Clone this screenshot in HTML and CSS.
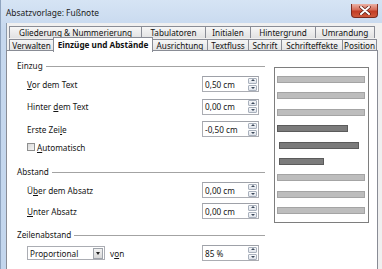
FILE: index.html
```html
<!DOCTYPE html>
<html lang="de">
<head>
<meta charset="utf-8">
<title>Absatzvorlage: Fußnote</title>
<link rel="stylesheet" href="styles.css">
</head>
<body>
<div class="window">
  <div class="titlebar">
    <span class="title">Absatzvorlage: Fußnote</span>
    <div class="close">
      <svg width="12" height="9" viewBox="0 0 12 9"><path d="M2 1 L10 8 M10 1 L2 8" stroke="#5a1a10" stroke-width="3.4" stroke-linecap="round"/><path d="M2 1 L10 8 M10 1 L2 8" stroke="#fff" stroke-width="2" stroke-linecap="round"/></svg>
    </div>
  </div>
  <div class="client">
    <div class="tabrow row1">
      <div class="tab w-glied">Gliederung &amp; Nummerierung</div>
      <div class="tab w-tab">Tabulatoren</div>
      <div class="tab w-init">Initialen</div>
      <div class="tab w-hint">Hintergrund</div>
      <div class="tab w-umr">Umrandung</div>
    </div>
    <div class="tabrow row2">
      <div class="tab w-verw">Verwalten</div>
      <div class="tab active w-einz">Einzüge und Abstände</div>
      <div class="tab w-ausr">Ausrichtung</div>
      <div class="tab w-text">Textfluss</div>
      <div class="tab w-schr">Schrift</div>
      <div class="tab w-eff">Schrifteffekte</div>
      <div class="tab w-pos">Position</div>
    </div>
    <div class="panel">
      <div class="form">
        <div class="hdr hdr-einzug"><span>Einzug</span><i></i></div>
        <div class="row r1"><span class="lbl"><u>V</u>or dem Text</span><div class="spin"><span>0,50 cm</span><b class="btns"><em class="up"></em><em class="dn"></em></b></div></div>
        <div class="row r2"><span class="lbl">Hinter <u>d</u>em Text</span><div class="spin"><span>0,00 cm</span><b class="btns"><em class="up"></em><em class="dn"></em></b></div></div>
        <div class="row r2"><span class="lbl">Erste Zei<u>l</u>e</span><div class="spin"><span>-0,50 cm</span><b class="btns"><em class="up"></em><em class="dn"></em></b></div></div>
        <div class="check"><span class="box"></span><span><u>A</u>utomatisch</span></div>
        <div class="hdr hdr-abstand"><span>Abstand</span><i></i></div>
        <div class="row r1"><span class="lbl">Ü<u>b</u>er dem Absatz</span><div class="spin"><span>0,00 cm</span><b class="btns"><em class="up"></em><em class="dn"></em></b></div></div>
        <div class="row r3"><span class="lbl"><u>U</u>nter Absatz</span><div class="spin"><span>0,00 cm</span><b class="btns"><em class="up"></em><em class="dn"></em></b></div></div>
        <div class="hdr hdr-zeilen"><span>Zeilenabstand</span><i></i></div>
        <div class="row r1 last">
          <div class="combo"><span>Proportional</span><b class="drop"><em class="dn"></em></b></div>
          <span class="von">v<u>o</u>n</span>
          <div class="spin"><span>85 %</span><b class="btns"><em class="up"></em><em class="dn"></em></b></div>
        </div>
      </div>
      <div class="preview">
        <div class="bar light"></div>
        <div class="bar light"></div>
        <div class="bar light"></div>
        <div class="bar dark d1"></div>
        <div class="bar dark d2"></div>
        <div class="bar dark d3"></div>
        <div class="bar light"></div>
        <div class="bar light"></div>
        <div class="bar light"></div>
      </div>
    </div>
  </div>
</div>
</body>
</html>
```
FILE: styles.css
```css
* { box-sizing: border-box; }
html, body { margin: 0; padding: 0; }
body {
  width: 382px;
  height: 269px;
  overflow: hidden;
  font-family: "Noto Sans", "Open Sans", sans-serif;
  font-size: 8.2px;
  color: #151515;
  background: #c9dbef;
}
u { text-decoration: underline; text-underline-offset: 1px; }

.window {
  height: 269px;
  border-left: 1px solid #8fa4bf;
  padding-left: 5px;
  background: linear-gradient(#d6e4f4, #c6d8ee 30px, #c3d6ed);
}

.titlebar {
  height: 23px;
  display: flex;
  align-items: flex-start;
}
.title {
  margin-top: 7px;
  line-height: 12px;
  font-size: 8.4px;
  color: #1a1a1a;
}
.close {
  margin-left: auto;
  margin-top: 4px;
  margin-right: 4px;
  width: 27px;
  height: 14px;
  border: 1px solid #7a2a1e;
  border-top: none;
  border-radius: 0 0 4px 4px;
  background: linear-gradient(#eab2a6, #d66a55 45%, #c23c24 55%, #cf5a3c);
  display: flex;
  align-items: center;
  justify-content: center;
}

.client {
  border-left: 1px solid #8d9aaa;
  background: #f0f0f0;
  padding-top: 3px;
  padding-right: 4px;
  height: 246px;
}

.tabrow { display: flex; height: 12px; }
.row1 { padding-left: 2px; }
.row2 { padding-left: 2px; height: 12px; }

.tab {
  height: 12px;
  border: 1px solid #898c95;
  border-bottom: none;
  margin-right: -1px;
  background: linear-gradient(#f6f6f6, #e2e2e2);
  line-height: 11px;
  text-align: center;
  white-space: nowrap;
  overflow: hidden;
  color: #111;
}
.row2 .tab { margin-top: 1px; height: 12px; }
.row2 .tab.active {
  margin-top: -1px;
  height: 15px;
  background: #fff;
  font-weight: bold;
  position: relative;
  z-index: 2;
  line-height: 13px;
}

.w-glied { width: 133px; }
.w-tab { width: 65px; }
.w-init { width: 46px; }
.w-hint { width: 66px; }
.w-umr { width: 60px; }
.w-verw { width: 45px; }
.w-einz { width: 100px; }
.w-ausr { width: 56px; }
.w-text { width: 42px; }
.w-schr { width: 34px; }
.w-eff { width: 62px; }
.w-pos { width: 35px; }

.panel {
  position: relative;
  z-index: 1;
  border: 1px solid #898c95;
  background: #fff;
  height: 230px;
  display: flex;
  padding-left: 10px;
  margin-left: -1px;
}

.form {
  width: 248px;
  display: flex;
  flex-direction: column;
}
.hdr {
  height: 12px;
  display: flex;
  align-items: center;
  line-height: 12px;
}
.hdr i {
  flex: 1;
  height: 1px;
  background: #a3a3a3;
  margin-left: 3px;
}
.hdr-einzug { margin-top: 9px; }
.hdr-abstand { margin-top: 13px; }
.hdr-zeilen { margin-top: 10px; }

.row {
  height: 16px;
  display: flex;
  align-items: center;
  padding-left: 10px;
  padding-right: 6px;
}
.r1 { margin-top: 4px; }
.r2 { margin-top: 6.5px; }
.r3 { margin-top: 5px; }
.lbl { flex: 1; }

.spin {
  width: 57px;
  height: 16px;
  border: 1px solid #abadb3;
  border-top-color: #9ea1a8;
  background: #fff;
  display: flex;
  align-items: center;
  padding-left: 2px;
  padding-right: 1px;
}
.spin span { flex: 1; }
.btns {
  width: 9px;
  height: 13px;
  display: flex;
  flex-direction: column;
  gap: 1px;
}
.btns em {
  flex: 1;
  border: 1px solid #a9b1bd;
  background: linear-gradient(#f7f8fa, #dfe3ea);
  position: relative;
  border-radius: 1px;
}
em.up::after, em.dn::after {
  content: "";
  position: absolute;
  left: 50%;
  top: 50%;
  margin-left: -2px;
  border-left: 2px solid transparent;
  border-right: 2px solid transparent;
}
em.up::after { margin-top: -1.5px; border-bottom: 2px solid #3c4a5c; }
em.dn::after { margin-top: -1px; border-top: 2px solid #3c4a5c; }

.check {
  margin-top: 4px;
  height: 12px;
  display: flex;
  align-items: center;
  padding-left: 10px;
  gap: 2px;
}
.check .box {
  width: 8px;
  height: 8px;
  border: 1px solid #8e8f8f;
  background: linear-gradient(135deg, #d8d8d8, #f6f6f6);
}

.combo {
  width: 78px;
  height: 14px;
  border: 1px solid #abadb3;
  background: #fff;
  display: flex;
  align-items: center;
  padding-left: 2px;
  padding-right: 1px;
}
.combo span { flex: 1; }
.drop {
  width: 10px;
  height: 11px;
  border: 1px solid #9fa4ab;
  background: linear-gradient(#f2f2f2, #d8d8d8);
  position: relative;
  display: flex;
}
.drop em { flex: 1; position: relative; }
.drop em.dn::after { border-left-width: 2.5px; border-right-width: 2.5px; border-top-width: 3px; margin-left: -2.5px; margin-top: -1.5px; border-top-color: #222; }
.von { margin-left: 5px; flex: 1; }

.preview {
  margin-left: 9px;
  margin-top: 16px;
  width: 95px;
  height: 156px;
  border: 1px solid #7e7e7e;
  background: #fff;
  padding: 8px 3px 0 2px;
  display: flex;
  flex-direction: column;
  gap: 9.4px;
}
.bar {
  height: 7px;
  flex: none;
}
.bar.light { background: #bdbdbd; border: 1px solid #a4a4a4; width: 88px; }
.bar.dark { background: #7b7b7b; border: 1px solid #5b5b5b; }
.d1 { width: 71px; }
.d2 { width: 80px; margin-left: 2px; }
.d3 { width: 45px; margin-left: 2px; }
```
